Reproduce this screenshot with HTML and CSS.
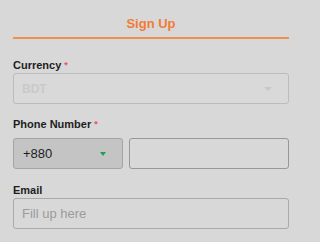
FILE: index.html
```html
<!DOCTYPE html>
<html>
<head>
<meta charset="utf-8">
<link rel="stylesheet" href="styles.css">
</head>
<body>
<div class="page">
  <div class="tabs"><span class="tab">Sign Up</span></div>
  <div class="field first">
    <div class="label">Currency <span class="req">*</span></div>
    <div class="box disabled">
      <span class="ph-light">BDT</span>
      <span class="caret grey"></span>
    </div>
  </div>
  <div class="field">
    <div class="label">Phone Number <span class="req">*</span></div>
    <div class="phone-row">
      <div class="box code">
        <span class="val">+880</span>
        <span class="caret green"></span>
      </div>
      <div class="box num"></div>
    </div>
  </div>
  <div class="field email">
    <div class="label">Email</div>
    <div class="box"><span class="ph">Fill up here</span></div>
  </div>
</div>
</body>
</html>
```
FILE: styles.css
```css
html, body {
  margin: 0;
  padding: 0;
  background: #d8d8d8;
}
body {
  font-family: "Liberation Sans", Arial, sans-serif;
  color: #222;
}
.page {
  width: 276px;
  padding: 0 11px 0 13px;
}
.tabs {
  padding-top: 14px;
  height: 23px;
  text-align: center;
  border-bottom: 2px solid #ef9050;
}
.tab {
  font-size: 13px;
  line-height: 18px;
  font-weight: bold;
  color: #f27b34;
}
.field.first {
  margin-top: 19px;
}
.field {
  margin-top: 13px;
}
.field.email {
  margin-top: 14px;
}
.label {
  font-size: 11px;
  line-height: 14px;
  font-weight: bold;
  color: #1e1e1e;
}
.req {
  color: #e8525a;
  font-size: 9px;
  vertical-align: top;
}
.box {
  margin-top: 1px;
  height: 29px;
  border: 1px solid #a9a9a9;
  border-radius: 3px;
  display: flex;
  align-items: center;
  padding: 0 8px;
  box-sizing: content-box;
  font-size: 13px;
}
.box.disabled {
  border-color: #bcbcbc;
  background: #d9d9d9;
  justify-content: space-between;
}
.ph-light {
  color: #c9c9c9;
  font-size: 12px;
  font-weight: bold;
}
.ph {
  color: #9b9b9b;
}
.caret {
  width: 0;
  height: 0;
  border-left: 4px solid transparent;
  border-right: 4px solid transparent;
  border-top: 4px solid #c8c8c8;
  margin-right: 8px;
}
.caret.green {
  border-top-color: #1f9e5c;
  border-left-width: 3.5px;
  border-right-width: 3.5px;
  margin-right: 8px;
}
.phone-row {
  display: flex;
  gap: 6px;
  margin-top: 7px;
}
.phone-row .box {
  margin-top: 0;
}
.box.code {
  width: 91px;
  background: #c4c4c4;
  border-color: #a4a4a4;
  justify-content: space-between;
  padding-left: 9px;
}
.val {
  color: #1e1e1e;
}
.box.num {
  flex: 1;
  border-color: #979797;
}
```
